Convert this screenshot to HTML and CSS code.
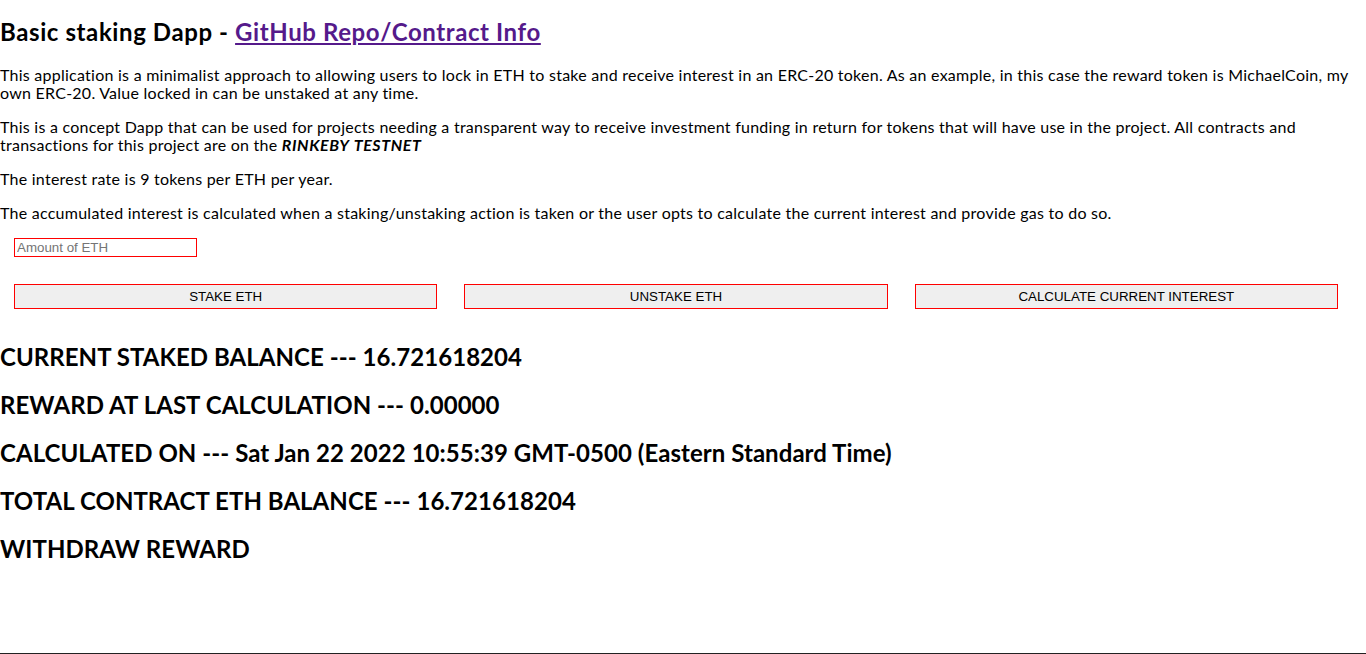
FILE: index.html
```html
<!DOCTYPE html>
<html>
<head>
<meta charset="utf-8">
<title>Basic staking Dapp</title>
<link rel="stylesheet" href="styles.css">
</head>
<body>
<div class="app">
  <h2 class="title">Basic staking Dapp - <a class="repo-link" href="#">GitHub Repo/Contract Info</a></h2>
  <p>This application is a minimalist approach to allowing users to lock in ETH to stake and receive interest in an ERC-20 token. As an example, in this case the reward token is MichaelCoin, my own ERC-20. Value locked in can be unstaked at any time.</p>
  <p>This is a concept Dapp that can be used for projects needing a transparent way to receive investment funding in return for tokens that will have use in the project. All contracts and transactions for this project are on the <b class="net"><i>RINKEBY TESTNET</i></b></p>
  <p>The interest rate is 9 tokens per ETH per year.</p>
  <p>The accumulated interest is calculated when a staking/unstaking action is taken or the user opts to calculate the current interest and provide gas to do so.</p>
  <div class="amount-row">
    <input class="amount" type="text" placeholder="Amount of ETH">
  </div>
  <div class="actions">
    <button class="action">STAKE ETH</button>
    <button class="action">UNSTAKE ETH</button>
    <button class="action">CALCULATE CURRENT INTEREST</button>
  </div>
  <h2 class="stat">CURRENT STAKED BALANCE --- 16.721618204</h2>
  <h2 class="stat">REWARD AT LAST CALCULATION --- 0.00000</h2>
  <h2 class="stat">CALCULATED ON --- Sat Jan 22 2022 10:55:39 GMT-0500 (Eastern Standard Time)</h2>
  <h2 class="stat">TOTAL CONTRACT ETH BALANCE --- 16.721618204</h2>
  <h2 class="stat">WITHDRAW REWARD</h2>
  <div class="bottom-rule"></div>
</div>
</body>
</html>
```
FILE: styles.css
```css
html, body {
  margin: 0;
  padding: 0;
  background: #fff;
}
body {
  font-family: Lato, "Noto Sans", sans-serif;
  color: #000;
  font-size: 16px;
}
.title {
  font-size: 24px;
  font-weight: bold;
  margin: 18px 0 20px;
  line-height: 28px;
  letter-spacing: 0.6px;
}
.repo-link {
  color: #551a8b;
}
p {
  margin: 16px 0;
  line-height: 18px;
  letter-spacing: 0.25px;
}
.net {
  letter-spacing: 0.6px;
  word-spacing: 1px;
}
.amount-row {
  padding-left: 14px;
}
.amount {
  display: block;
  box-sizing: border-box;
  width: 183px;
  height: 19px;
  border: 1px solid #ff0000;
  padding: 0 2px;
  font-family: "Liberation Sans", Arial, sans-serif;
  font-size: 13.33px;
  outline: none;
}
.amount::placeholder {
  color: #757575;
}
.actions {
  display: flex;
  gap: 27px;
  padding: 27px 28px 14px 14px;
}
.action {
  flex: 1;
  height: 25px;
  box-sizing: border-box;
  border: 1px solid #ff0000;
  background: #efefef;
  font-family: "Liberation Sans", Arial, sans-serif;
  font-size: 13.33px;
  color: #000;
  padding: 0;
}
.stat {
  font-size: 24px;
  font-weight: bold;
  margin: 19.92px 0;
  line-height: 28px;
  letter-spacing: 0.05px;
}
.bottom-rule {
  margin-top: 90px;
  height: 1px;
  background: #222;
}
```
